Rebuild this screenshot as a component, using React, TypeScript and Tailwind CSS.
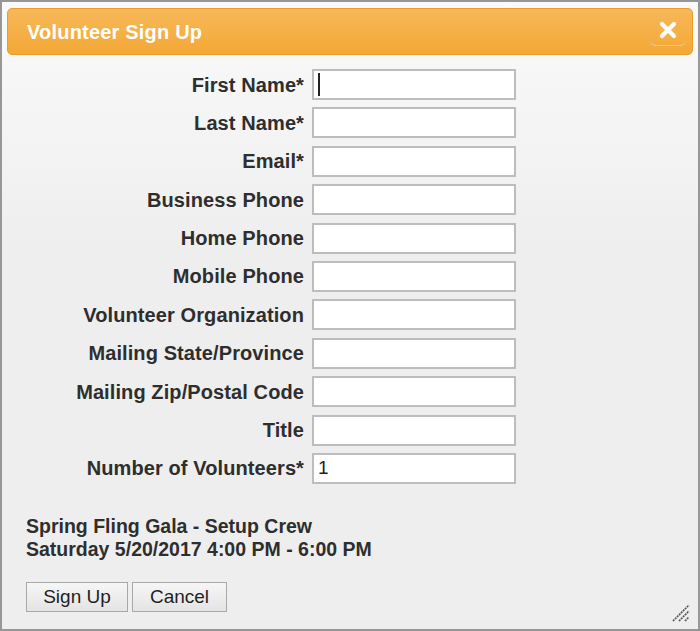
import React from "react";

const fields = [
  { label: "First Name*", value: "", focus: true },
  { label: "Last Name*", value: "" },
  { label: "Email*", value: "" },
  { label: "Business Phone", value: "" },
  { label: "Home Phone", value: "" },
  { label: "Mobile Phone", value: "" },
  { label: "Volunteer Organization", value: "" },
  { label: "Mailing State/Province", value: "" },
  { label: "Mailing Zip/Postal Code", value: "" },
  { label: "Title", value: "" },
  { label: "Number of Volunteers*", value: "1" },
];

export default function App() {
  return (
    <div className="relative flex h-[631px] w-[700px] flex-col border-2 border-[#979797] bg-linear-to-b from-[#fafafa] via-[#eeeeee] via-40% to-[#eeeeee] font-['Liberation_Sans',Arial,sans-serif] text-[#2e2e2e]">
      {/* Title bar */}
      <div className="mx-[5px] mt-[6px] flex h-[47px] items-center justify-between rounded-[5px] border border-[#e99b2e] bg-linear-to-b from-[#f7b857] to-[#f4a834] pl-[19px] pr-[6px]">
        <span className="text-[20px] font-bold tracking-[0.2px] text-white">Volunteer Sign Up</span>
        <button className="mt-[-2px] flex h-[31px] w-[36px] items-center justify-center rounded-b-[6px] border-b-[1.5px] border-[#d9cdb6]">
          <svg width="18" height="18" viewBox="0 0 18 18" aria-hidden="true">
            <path d="M3 3 L15 15 M15 3 L3 15" stroke="white" strokeWidth="4.2" strokeLinecap="round" />
          </svg>
        </button>
      </div>

      {/* Form */}
      <div className="mt-[14px] grid grid-cols-[302px_204px] gap-x-2 gap-y-[7.4px]">
        {fields.map((f) => (
          <React.Fragment key={f.label}>
            <label className="flex h-[31px] items-center justify-end text-[20px] font-bold tracking-[0.1px]">
              {f.label}
            </label>
            <div className="flex h-[31px] items-center border-2 border-[#bdbdbd] bg-white px-[4px] text-[19px] text-[#1f1f1f]">
              {f.focus ? <span className="h-[23px] w-[2px] bg-[#222]" /> : f.value}
            </div>
          </React.Fragment>
        ))}
      </div>

      {/* Event info */}
      <div className="mt-[31px] pl-[24px] text-[19.5px] leading-[23px] font-bold">
        <p>Spring Fling Gala - Setup Crew</p>
        <p>Saturday 5/20/2017 4:00 PM - 6:00 PM</p>
      </div>

      {/* Buttons */}
      <div className="mt-[21px] flex gap-[4px] pl-[24px]">
        <button className="h-[30px] w-[102px] border border-[#a8a8a8] bg-linear-to-b from-[#f6f6f6] to-[#e4e4e4] text-[19px] leading-none text-[#1f1f1f]">
          Sign Up
        </button>
        <button className="h-[30px] w-[95px] border border-[#a8a8a8] bg-linear-to-b from-[#f6f6f6] to-[#e4e4e4] text-[19px] leading-none text-[#1f1f1f]">
          Cancel
        </button>
      </div>

      {/* Resize grip */}
      <svg
        className="absolute right-[8px] bottom-[7px]"
        width="18"
        height="18"
        viewBox="0 0 18 18"
        aria-hidden="true"
      >
        <path d="M1 17 L17 1 M7 17 L17 7 M13 17 L17 13" stroke="#555" strokeWidth="1.6" strokeDasharray="2 0.8" />
      </svg>
    </div>
  );
}
